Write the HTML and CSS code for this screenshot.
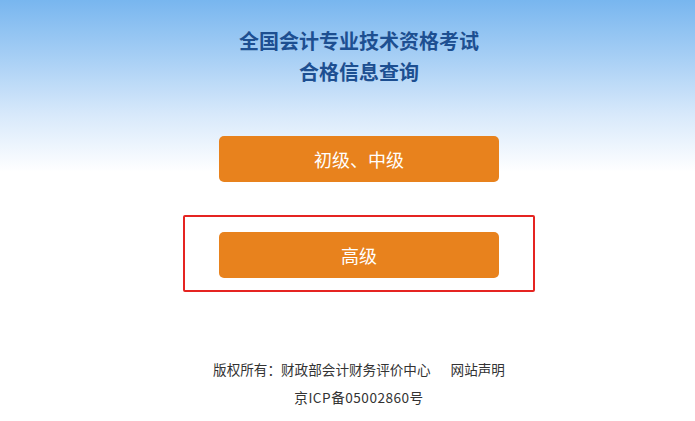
FILE: index.html
```html
<!DOCTYPE html>
<html lang="zh-CN">
<head>
<meta charset="utf-8">
<title>合格信息查询</title>
<link rel="stylesheet" href="styles.css">
</head>
<body>
<div class="page">
  <h1 class="title"><span class="title-main">全国会计专业技术资格考试</span><span class="title-sub">合格信息查询</span></h1>
  <div class="buttons">
    <a class="btn" href="#">初级、中级</a>
    <div class="highlight">
      <a class="btn" href="#">高级</a>
    </div>
  </div>
  <div class="footer">
    <p class="footer-line">版权所有：财政部会计财务评价中心<span class="sep"></span>网站声明</p>
    <p class="footer-line footer-icp">京ICP备05002860号</p>
  </div>
</div>
</body>
</html>
```

FILE: styles.css
```css
html, body {
  margin: 0;
  padding: 0;
}
body {
  background: #fff linear-gradient(to bottom, #78b6ef 0, #a9d0f5 60px, #d8e9fb 115px, #ffffff 172px) no-repeat;
  background-size: 100% 180px;
  font-family: "Noto Sans CJK SC", "Noto Sans", sans-serif;
  height: 421px;
  overflow: hidden;
}
.page {
  padding-left: 23px;
  display: flex;
  flex-direction: column;
  align-items: center;
}
.title {
  margin: 27px 0 0;
  font-weight: bold;
  color: #1d4f91;
  text-align: center;
  display: flex;
  flex-direction: column;
  align-items: center;
}
.title-main {
  font-size: 20px;
  line-height: 28px;
}
.title-sub {
  font-size: 20px;
  line-height: 34px;
}
.buttons {
  margin-top: 47px;
  display: flex;
  flex-direction: column;
  align-items: center;
}
.btn {
  display: block;
  width: 280px;
  height: 46px;
  line-height: 46px;
  background: #e8821d;
  border-radius: 5px;
  color: #fff;
  font-size: 18px;
  text-align: center;
  text-decoration: none;
}
.highlight {
  margin-top: 33px;
  border: 2px solid #e52421;
  border-radius: 2px;
  padding: 15px 34px 12px 34px;
}
.footer {
  margin-top: 63px;
  text-align: center;
  color: #333;
  font-size: 13.6px;
}
.footer-line {
  margin: 0;
  line-height: 28px;
}
.footer-icp {
  letter-spacing: 0.5px;
}
.sep {
  display: inline-block;
  width: 20px;
}
```
